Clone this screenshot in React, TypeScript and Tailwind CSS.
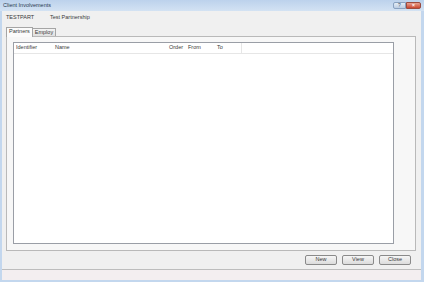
export default function App() {
  const font = { fontFamily: '"Liberation Sans", Arial, sans-serif' };
  return (
    <div className="w-[424px] h-[282px] flex flex-col bg-[#c3d7ee] text-[#3a3a3a]" style={font}>
      {/* title bar */}
      <div className="h-[11px] flex items-center justify-between bg-gradient-to-b from-[#bcd2ec] to-[#d3e2f3] pl-[3px] pr-[3px]">
        <span className="text-[5.5px] leading-none text-[#2a3a50]">Client Involvements</span>
        <div className="flex items-start self-start mt-[2px]">
          <div className="w-[13px] h-[7px] border border-[#8aa2c0] rounded-l-[2px] bg-gradient-to-b from-[#e4edf7] to-[#bccde2] flex items-center justify-center text-[5px] leading-none text-[#3b4e66]">
            ?
          </div>
          <div className="w-[15px] h-[7px] border border-[#9b4b3f] rounded-r-[2px] bg-gradient-to-b from-[#e8a090] to-[#c8452f] flex items-center justify-center text-[5px] leading-none text-white font-bold">
            ×
          </div>
        </div>
      </div>

      {/* body */}
      <div className="flex-1 flex flex-col ml-[2px] mr-[3px] mb-[2px] bg-[#f0f0f0]">
        <div className="h-[13px] flex items-center text-[5.5px] leading-none pl-[4px]">
          <span className="w-[44px]">TESTPART</span>
          <span>Test Partnership</span>
        </div>

        {/* tabs */}
        <div className="flex items-end pl-[4px] h-[12px]">
          <div className="h-[10px] px-[2px] flex items-center border border-b-0 border-[#a5a5a5] bg-[#fbfbfb] text-[5.5px] leading-none relative z-10 -mb-[1px] pb-[1px]">
            Partners
          </div>
          <div className="h-[8px] px-[2px] flex items-center border border-b-0 border-l-0 border-[#a5a5a5] bg-gradient-to-b from-[#f4f4f4] to-[#e0e0e0] text-[5.5px] leading-none">
            Employ
          </div>
        </div>

        {/* tab page */}
        <div className="ml-[4px] mr-[5px] h-[215px] border border-[#b9b9b9] bg-[#f7f7f7] pl-[6px] pt-[5px] pr-[21px] pb-[6px] flex">
          <div className="flex-1 border border-[#9a9ea6] bg-white flex flex-col">
            <div className="h-[11px] flex items-center border-b border-[#e6e6e6] text-[5.5px] leading-none text-[#3a3a3a]">
              <span className="w-[41px] pl-[2px]">Identifier</span>
              <span className="w-[114px]">Name</span>
              <span className="w-[19px]">Order</span>
              <span className="w-[29px]">From</span>
              <span className="w-[25px] h-full flex items-center border-r border-[#e6e6e6]">To</span>
            </div>
          </div>
        </div>

        {/* buttons */}
        <div className="mt-[4px] flex justify-end gap-[5px] pr-[10px]">
          {['New', 'View', 'Close'].map((b) => (
            <div
              key={b}
              className="w-[32px] h-[10px] border border-[#8a8a8a] rounded-[2px] bg-gradient-to-b from-[#f6f6f6] to-[#dcdcdc] flex items-center justify-center text-[5.5px] leading-none"
            >
              {b}
            </div>
          ))}
        </div>

        {/* status strip */}
        <div className="mt-auto h-[11px] border-t border-[#bdbdbd] bg-[#f3eef0]" />
      </div>
    </div>
  );
}
